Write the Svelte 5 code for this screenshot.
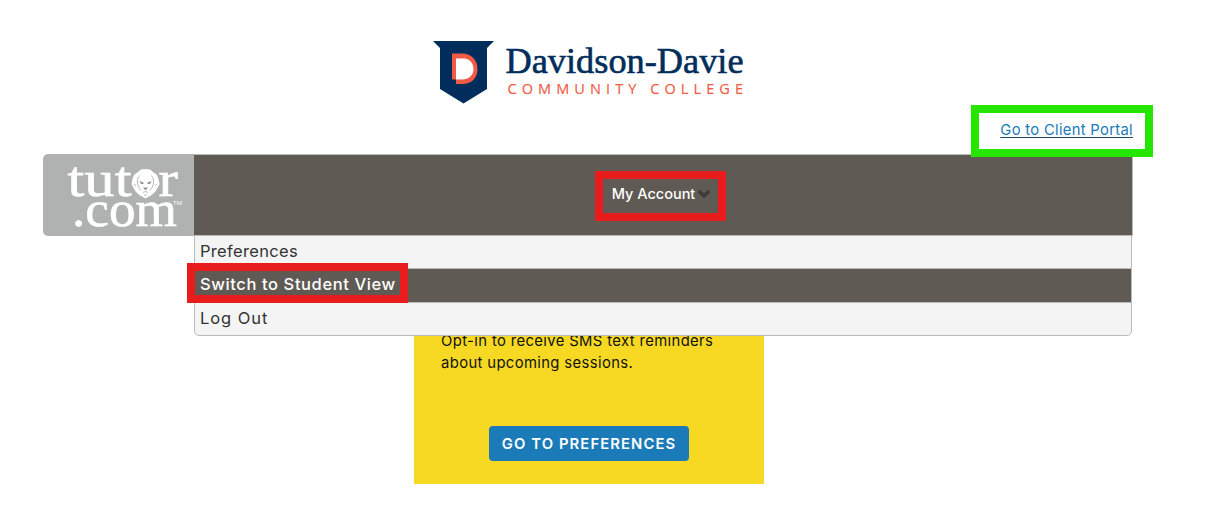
<script>
  let menuOpen = true;
  let selected = 'student-view';

  const menuItems = [
    { id: 'preferences', label: 'Preferences' },
    { id: 'student-view', label: 'Switch to Student View' },
    { id: 'log-out', label: 'Log Out' }
  ];
</script>

<div class="page">
  <header class="brand">
    <svg width="312" height="64" viewBox="0 0 312 64" role="img" aria-label="Davidson-Davie Community College">
      <path d="M0 0H61L54 7V48L30.500 62.500L7 48V7Z" fill="#002d5b" />
      <path d="M19 12.500H29C38.500 12.500 44.500 19 44.500 28S38.500 43 29 43H23V38.500H19Z" fill="#f15a43" />
      <path d="M23 17.500H32C37 18.500 40.500 22.500 40.500 28C40.500 34 36 38.500 29 38.500H23Z" fill="#fff" />
      <text class="college" x="72.500" y="31.500" textLength="238" lengthAdjust="spacingAndGlyphs">Davidson-Davie</text>
      <text class="community" x="74.500" y="53" textLength="235.500">COMMUNITY COLLEGE</text>
    </svg>
  </header>

  <div class="portal">
    <a href="#portal">Go to Client Portal</a>
    <span class="mark mark-portal"></span>
  </div>

  <nav class="bar">
    <a class="tutor" href="#home" aria-label="tutor.com">
      <svg width="151" height="82" viewBox="0 0 151 82">
        <g class="tutor-text">
          <text x="24.500" y="41.500" textLength="64" lengthAdjust="spacingAndGlyphs">tut</text>
          <text x="115.500" y="41.500" textLength="19.500" lengthAdjust="spacingAndGlyphs">r</text>
          <text x="29" y="71.500" textLength="105" lengthAdjust="spacingAndGlyphs">.com</text>
        </g>
        <text class="tm" x="130" y="51" textLength="9" lengthAdjust="spacingAndGlyphs">TM</text>
        <!-- lion head -->
        <path d="M102.500 15L107 15.500L110 18L114 21L115.500 25L116.500 30L114.500 34L112 38L108 41.500L105 43L102.500 44.500L100 43L97 41.500L93 38L90.500 34L88.500 30L89.500 25L91 21L95 18L98 15.500Z" fill="#fff" />
        <path class="lion-line" d="M97 21.500C94.500 23 94.500 26 94.500 29C95 32 96 34 98 36.500M108 21.500C110.500 23 110.500 26 110.500 29C110 32 109 34 107 36.500M91 30L93 32M114 30L112 32" />
        <path class="lion-line" d="M100 38.500L102.500 37.500L105 38.500M101 41H104" />
        <path d="M96.500 27L100.500 28.500V30H98ZM108.500 27L104.500 28.500V30H107ZM100 33.500H105L102.500 36.500Z" fill="#8f9291" />
      </svg>
    </a>

    <div class="account">
      <button class="account-btn" on:click={() => (menuOpen = !menuOpen)}>
        <span>My Account</span>
        <svg width="14" height="10" viewBox="0 0 14 10">
          <path d="M2 2L7 7L12 2" fill="none" stroke="#3d3a38" stroke-width="3.200" />
        </svg>
        <span class="mark mark-account"></span>
      </button>

      {#if menuOpen}
        <ul class="menu">
          {#each menuItems as item}
            <li class:selected={item.id === selected}>
              <a href="#{item.id}" class={item.id}>{item.label}</a>
              {#if item.id === selected}
                <span class="mark mark-item"></span>
              {/if}
            </li>
          {/each}
        </ul>
      {/if}
    </div>
  </nav>

  <section class="card">
    <p>Opt-in to receive SMS text reminders</p>
    <p>about upcoming sessions.</p>
    <a class="cta" href="#preferences">GO TO PREFERENCES</a>
  </section>
</div>

<style>
  :global(body) {
    background: #fff;
    font-family: Inter, "Open Sans", sans-serif;
  }

  .page {
    box-sizing: border-box;
    width: 1209px;
    height: 532px;
    padding: 41px 76px 0 43px;
    overflow: hidden;
  }

  .brand {
    height: 64px;
    padding-left: 390px;
  }

  .brand svg {
    display: block;
    overflow: visible;
  }

  .college {
    font-family: "Liberation Serif", serif;
    font-size: 36px;
    fill: #002d5b;
    stroke: #002d5b;
    stroke-width: 0.6px;
  }

  .community {
    font-family: "Open Sans", sans-serif;
    font-size: 14.5px;
    fill: #f15a43;
    stroke: #f15a43;
    stroke-width: 0.15px;
  }

  .portal {
    position: relative;
    display: flex;
    justify-content: flex-end;
    height: 49px;
    box-sizing: border-box;
    padding-top: 15px;
  }

  .portal a {
    color: #1b7ab8;
    font-size: 14.8px;
    line-height: 20px;
    letter-spacing: 0.3px;
    text-decoration: underline #1b4a6b;
    text-underline-offset: 2px;
  }

  .mark {
    position: absolute;
    z-index: 5;
    box-sizing: border-box;
    border: 8px solid #e81c1c;
    pointer-events: none;
  }

  .mark-portal {
    top: 0;
    right: -20px;
    width: 182px;
    height: 52px;
    border-color: #26e600;
  }

  .bar {
    display: flex;
    height: 82px;
  }

  .tutor {
    width: 151px;
    height: 82px;
    background: #b0b2b1;
    border-radius: 5px 0 0 5px;
  }

  .tutor svg {
    display: block;
    overflow: visible;
  }

  .tutor-text {
    font-family: "Liberation Serif", serif;
    font-size: 50px;
    fill: #fff;
    stroke: #fff;
    stroke-width: 0.6px;
  }

  .tm {
    font-family: "Open Sans", sans-serif;
    font-size: 6px;
    fill: #fff;
  }

  .lion-line {
    fill: none;
    stroke: #b0b2b1;
    stroke-width: 0.9;
  }

  .account {
    position: relative;
    display: flex;
    flex: 1;
    box-sizing: border-box;
    align-items: center;
    justify-content: center;
    background: #605a55;
    border: solid #bbb;
    border-width: 1px 1px 1px 0;
    border-radius: 0 3px 0 0;
  }

  .account-btn {
    position: relative;
    display: flex;
    align-items: center;
    gap: 2px;
    height: 20px;
    margin: 0 5px 2px 0;
    padding: 0 0 0 2px;
    border: 0;
    background: none;
    color: #fff;
    font: 500 14.5px/20px Inter, sans-serif;
  }

  .mark-account {
    top: -13px;
    left: -15px;
    width: 131px;
    height: 50px;
  }

  .menu {
    position: absolute;
    top: 80px;
    left: 0;
    z-index: 2;
    box-sizing: border-box;
    width: 938px;
    margin: 0;
    padding: 0;
    border: 1px solid #bbb;
    border-radius: 0 0 5px 5px;
    background: #f4f4f4;
    list-style: none;
  }

  .menu li {
    position: relative;
    height: 32px;
    padding-left: 5px;
    line-height: 30px;
  }

  .menu li + li {
    height: 33px;
    border-top: 1px solid #bbb;
  }

  .menu li:last-child {
    height: 32px;
  }

  .menu a {
    color: #333;
    font-size: 16.5px;
    letter-spacing: 0.32px;
    text-decoration: none;
  }

  .menu .selected {
    background: #605a55;
  }

  .menu .selected a {
    color: #fff;
    font-weight: 500;
    letter-spacing: 0.6px;
  }

  .menu .log-out {
    letter-spacing: 0.95px;
  }

  .mark-item {
    top: -6px;
    left: -8px;
    width: 221px;
    height: 40px;
  }

  .card {
    display: flex;
    flex-direction: column;
    box-sizing: border-box;
    width: 350px;
    height: 248px;
    margin-left: 371px;
    padding: 94px 27px 0;
    background: #f7d923;
    color: #111;
  }

  .card p {
    margin: 0;
    font-size: 14.8px;
    line-height: 22px;
    letter-spacing: 0.38px;
    white-space: nowrap;
  }

  .cta {
    align-self: center;
    width: 200px;
    height: 35px;
    margin-top: 52px;
    border-radius: 4px;
    background: #1b7ab8;
    color: #fff;
    font-size: 14.8px;
    font-weight: 600;
    letter-spacing: 1.1px;
    line-height: 37px;
    text-align: center;
    text-decoration: none;
  }
</style>
